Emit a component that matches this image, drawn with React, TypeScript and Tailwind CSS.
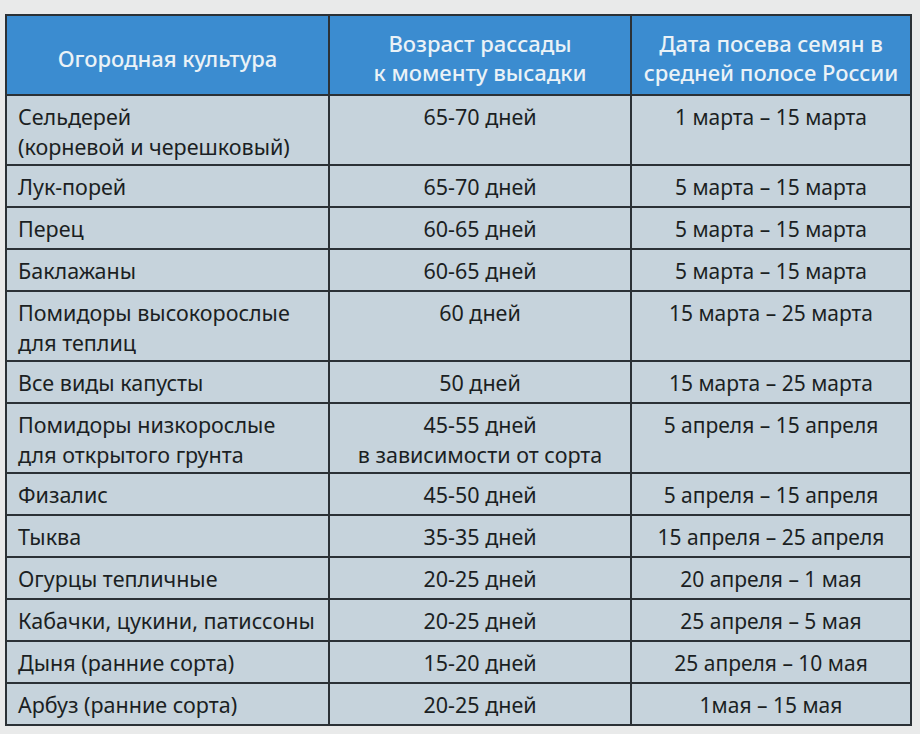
import React from 'react';

interface Row {
  crop: string[];
  age: string[];
  date: string;
}

const rows: Row[] = [
  { crop: ['Сельдерей', '(корневой и черешковый)'], age: ['65-70 дней'], date: '1 марта – 15 марта' },
  { crop: ['Лук-порей'], age: ['65-70 дней'], date: '5 марта – 15 марта' },
  { crop: ['Перец'], age: ['60-65 дней'], date: '5 марта – 15 марта' },
  { crop: ['Баклажаны'], age: ['60-65 дней'], date: '5 марта – 15 марта' },
  { crop: ['Помидоры высокорослые', 'для теплиц'], age: ['60 дней'], date: '15 марта – 25 марта' },
  { crop: ['Все виды капусты'], age: ['50 дней'], date: '15 марта – 25 марта' },
  { crop: ['Помидоры низкорослые', 'для открытого грунта'], age: ['45-55 дней', 'в зависимости от сорта'], date: '5 апреля – 15 апреля' },
  { crop: ['Физалис'], age: ['45-50 дней'], date: '5 апреля – 15 апреля' },
  { crop: ['Тыква'], age: ['35-35 дней'], date: '15 апреля – 25 апреля' },
  { crop: ['Огурцы тепличные'], age: ['20-25 дней'], date: '20 апреля – 1 мая' },
  { crop: ['Кабачки, цукини, патиссоны'], age: ['20-25 дней'], date: '25 апреля – 5 мая' },
  { crop: ['Дыня (ранние сорта)'], age: ['15-20 дней'], date: '25 апреля – 10 мая' },
  { crop: ['Арбуз (ранние сорта)'], age: ['20-25 дней'], date: '1мая – 15 мая' },
];

const App: React.FC = () => {
  return (
    <div
      className="w-[920px] h-[734px] bg-[#e9eaea] pt-[14px] pl-[5px]"
      style={{ fontFamily: '"Noto Sans", "Open Sans", sans-serif' }}
    >
      <div className="w-[907px] border-l-2 border-t-2 border-[#2b3136] grid grid-cols-[323px_302px_280px]">
        {/* Header */}
        <div className="h-[80px] bg-[#3b8cd0] border-r-2 border-b-2 border-[#2b3136] pt-[6px] flex items-center justify-center text-[#eaf2f7] text-[22px] font-medium leading-[29px]">
          Огородная культура
        </div>
        <div className="h-[80px] bg-[#3b8cd0] border-r-2 border-b-2 border-[#2b3136] pt-[6px] flex flex-col items-center justify-center text-[#eaf2f7] text-[22px] font-medium leading-[29px]">
          <span>Возраст рассады</span>
          <span>к моменту высадки</span>
        </div>
        <div className="h-[80px] bg-[#3b8cd0] border-r-2 border-b-2 border-[#2b3136] pt-[6px] flex flex-col items-center justify-center text-[#eaf2f7] text-[22px] font-medium leading-[29px]">
          <span>Дата посева семян в</span>
          <span>средней полосе России</span>
        </div>

        {/* Body */}
        {rows.map((row, i) => {
          const tall = row.crop.length > 1 || row.age.length > 1;
          const h = tall ? 'h-[70px]' : 'h-[42px]';
          return (
            <React.Fragment key={i}>
              <div className={`${h} bg-[#c6d3dc] border-r-2 border-b-2 border-[#2b3136] pl-[11px] pt-[6px] text-[#1b1f23] text-[21.5px] leading-[30px] flex flex-col`}>
                {row.crop.map((t) => (
                  <span key={t}>{t}</span>
                ))}
              </div>
              <div className={`${h} bg-[#c6d3dc] border-r-2 border-b-2 border-[#2b3136] pt-[6px] text-[#1b1f23] text-[21.5px] leading-[30px] flex flex-col items-center`}>
                {row.age.map((t) => (
                  <span key={t}>{t}</span>
                ))}
              </div>
              <div className={`${h} bg-[#c6d3dc] border-r-2 border-b-2 border-[#2b3136] pt-[6px] text-[#1b1f23] text-[21px] leading-[30px] flex flex-col items-center`}>
                <span>{row.date}</span>
              </div>
            </React.Fragment>
          );
        })}
      </div>
    </div>
  );
};

export default App;
